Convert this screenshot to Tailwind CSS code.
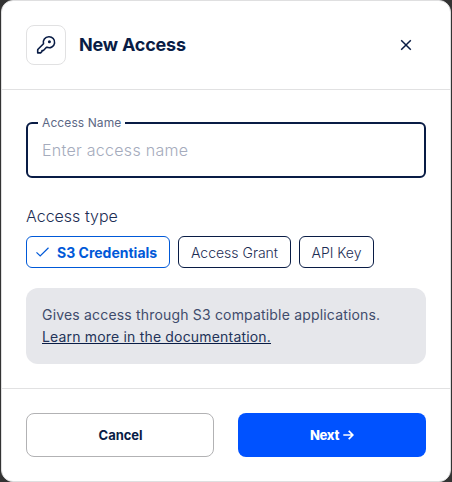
<!DOCTYPE html>
<html lang="en">
<head>
<meta charset="utf-8">
<title>New Access</title>
<script src="https://cdn.jsdelivr.net/npm/@tailwindcss/browser@4"></script>
</head>
<body class="h-[482px] w-[452px] overflow-hidden bg-[#333333] px-px font-['Inter',sans-serif] text-[#091c45]">
<main class="flex h-[482px] w-[450px] flex-col rounded-[12px] border border-[#dfdfe0] bg-white">
  <header class="flex h-[89px] shrink-0 items-center border-b border-[#e1e1e2] px-6">
    <div class="flex size-10 items-center justify-center rounded-lg border border-[#e1e1e2]">
      <svg class="size-5" viewBox="0 0 20 20" fill="none">
        <path d="M12.800 1.700A5.500 5.500 0 0 0 7.500 8.800L2 14.300C1.800 14.500 1.700 14.700 1.700 15V17.900H4.600L6 16.500V15.500H7.400L10.500 12.200 11.100 12.300A5.500 5.500 0 1 0 12.800 1.700Z" stroke="#091c45" stroke-width="1.600" stroke-linejoin="round"/>
        <circle cx="13.400" cy="6.800" r="1.500" fill="#091c45"/>
      </svg>
    </div>
    <h1 class="ml-[13px] text-[18px] leading-6 font-bold tracking-[-0.2px]">New Access</h1>
    <button class="mr-[14px] ml-auto" aria-label="Close">
      <svg class="size-3" viewBox="0 0 12 12" fill="none" stroke="#091c45" stroke-width="1.500"><path d="M1.200 1.200l9.600 9.600M10.800 1.200L1.200 10.800"/></svg>
    </button>
  </header>
  <section class="flex h-[299px] shrink-0 flex-col border-b border-[#e1e1e2] px-6 pt-8">
    <div class="relative flex h-14 shrink-0 items-center rounded-[6px] border-2 border-[#091c45] px-[14px]">
      <span class="absolute -top-[9px] left-[10px] bg-white px-1 text-[12px] leading-4 tracking-[0.1px] text-[#5c6885]">Access Name</span>
      <span class="text-[16px] leading-6 font-light tracking-[0.28px] text-[#a5abbc]">Enter access name</span>
    </div>
    <h2 class="mt-[26px] text-[16px] leading-6 font-light text-[#1c2d54]">Access type</h2>
    <div class="mt-2 flex gap-2 text-[14px] leading-5">
      <div class="flex h-8 w-36 items-center rounded-[6px] border border-[#0059d8] pt-px pl-[9px] font-bold text-[#0059d8]">
        <svg class="-mt-px h-[10px] w-[13px]" viewBox="0 0 13 10" fill="none" stroke="#0059d8" stroke-width="1.200"><path d="M.5 5.400L4.200 9 12.500.8"/></svg>
        <span class="ml-2 whitespace-nowrap">S3 Credentials</span>
      </div>
      <div class="flex h-8 w-[113px] items-center justify-center rounded-[6px] border border-[#091c45] pt-px font-light whitespace-nowrap text-[#1c2d54]">Access Grant</div>
      <div class="flex h-8 w-[75px] items-center justify-center rounded-[6px] border border-[#091c45] pt-px font-light whitespace-nowrap text-[#1c2d54]">API Key</div>
    </div>
    <div class="mt-5 h-[76px] shrink-0 rounded-[12px] bg-[#e6e7eb] px-4 pt-4 text-[14px] leading-[22px] tracking-[0.18px] whitespace-nowrap">
      <p class="text-[#3f4c6c]">Gives access through S3 compatible applications.</p>
      <a class="text-[#243459] underline decoration-[#091c45]">Learn more in the documentation.</a>
    </div>
  </section>
  <footer class="flex gap-6 px-6 pt-6 text-[13px] leading-5 font-bold">
    <button class="h-11 w-[188px] rounded-lg border border-[#b2b2b4] pl-px tracking-[-0.05px]">Cancel</button>
    <button class="flex h-11 w-[188px] items-center justify-center gap-1 rounded-lg bg-[#0052ff] text-white"><span class="font-extrabold tracking-[-0.3px]">Next</span>
      <svg class="h-[10px] w-[11px]" viewBox="0 0 11 10" fill="none" stroke="white" stroke-width="1.700"><path d="M.3 5H9.500M5.700.8L9.900 5 5.700 9.200"/></svg>
    </button>
  </footer>
</main>
</body>
</html>
